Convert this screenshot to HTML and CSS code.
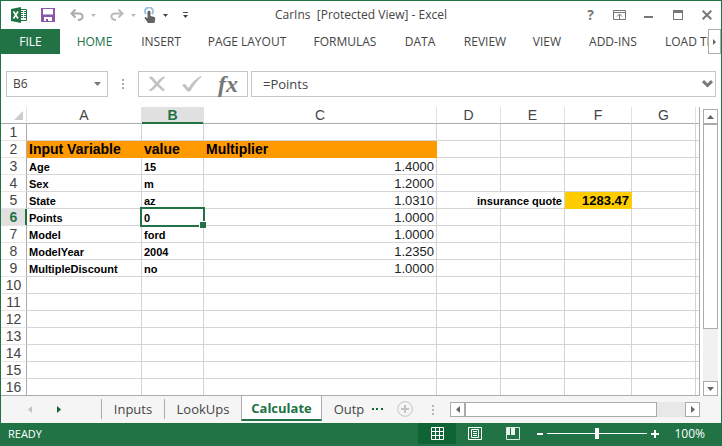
FILE: index.html
```html
<!DOCTYPE html>
<html lang="en">
<head>
<meta charset="utf-8">
<title>CarIns [Protected View] - Excel</title>
<link rel="stylesheet" href="styles.css">
</head>
<body>
<div class="window">
  <header class="titlebar">
    <div class="quick">
      <svg class="logo" width="16" height="16" viewBox="0 0 16 16" aria-hidden="true"><path fill="#fff" stroke="#217346" d="M8.500 2.500h7v11h-7z"/><path stroke="#217346" stroke-width="1" d="M10 4.500h2M13 4.500h2M10 6.500h2M13 6.500h2M10 8.500h2M13 8.500h2M10 10.500h2M13 10.500h2"/><path fill="#217346" d="M0 2l10-2v16L0 14z"/><path fill="none" stroke="#fff" stroke-width="1.600" d="M2.500 4.500l4.500 7M7 4.500l-4.500 7"/></svg>
      <button class="tool" aria-label="Save"><svg width="14" height="14" viewBox="0 0 14 14"><path fill="#8a55ab" fill-rule="evenodd" d="M0 0h14v14H0zM2 1v5.500h10V1zM3 9v4h2v-2h2v2h4V9z"/></svg></button>
      <button class="tool" aria-label="Undo"><svg width="14" height="12" viewBox="0 0 14 12"><path fill="none" stroke="#ababab" stroke-width="2" d="M5.500 0.500L1.500 4.500L5.500 8.500M2 4.500h7c5 0 5 6-1 6.500"/></svg></button>
      <button class="tool caret-pale undo-list" aria-label="Undo list"><svg width="5" height="3" viewBox="0 0 5 3"><path d="M0 0h5L2.500 3z"/></svg></button>
      <button class="tool" aria-label="Redo"><svg width="14" height="12" viewBox="0 0 14 12"><path fill="none" stroke="#bcbcbc" stroke-width="2" d="M8.500 0.500L12.500 4.500L8.500 8.500M12 4.500H5c-5 0-5 6 1 6.500"/></svg></button>
      <button class="tool caret-pale" aria-label="Redo list"><svg width="5" height="3" viewBox="0 0 5 3"><path d="M0 0h5L2.500 3z"/></svg></button>
      <button class="tool" aria-label="Touch mode"><svg width="12" height="16" viewBox="0 0 12 16"><path fill="none" stroke="#9fbfe0" stroke-width="2" d="M2 7a4 4 0 1 1 6 0"/><path fill="#636363" d="M3.500 4.500q1.500-1.500 3 0V9l4 1q1 .3.700 2L10.500 16H4L0.500 11q.5-1.500 2-.5l1 1z"/></svg></button>
      <button class="tool caret-dark" aria-label="Touch mode list"><svg width="5" height="3" viewBox="0 0 5 3"><path d="M0 0h5L2.500 3z"/></svg></button>
      <button class="tool caret-dark" aria-label="Customize toolbar"><svg width="5" height="6" viewBox="0 0 5 6"><path d="M0 0h5v1H0zM0 3h5L2.500 6z"/></svg></button>
    </div>
    <h1>CarIns&nbsp; [Protected View] - Excel</h1>
    <div class="sysbuttons">
      <button class="tool help" aria-label="Help">?</button>
      <button class="tool" aria-label="Ribbon options"><svg width="13" height="10" viewBox="0 0 13 10"><path fill="none" stroke="#777" d="M.5.500h12v9H.500zM.500 2.500h12M6.500 4v5M4 6.500L6.500 4L9 6.500"/></svg></button>
      <button class="tool" aria-label="Minimize"><svg width="9" height="10" viewBox="0 0 9 10"><path fill="#777" d="M0 6h9v2H0z"/></svg></button>
      <button class="tool" aria-label="Maximize"><svg width="10" height="10" viewBox="0 0 10 10"><path fill="#777" fill-rule="evenodd" d="M0 0h10v10H0zM1 3v6h8V3z"/></svg></button>
      <button class="tool" aria-label="Close"><svg width="10" height="10" viewBox="0 0 10 10"><path stroke="#777" stroke-width="2" d="M.7.700l8.600 8.600M9.300.700L.7 9.300"/></svg></button>
    </div>
  </header>

  <nav class="ribbon">
    <a class="file" href="#">FILE</a>
    <a class="current" href="#">HOME</a>
    <a href="#">INSERT</a>
    <a href="#">PAGE LAYOUT</a>
    <a href="#">FORMULAS</a>
    <a href="#">DATA</a>
    <a href="#">REVIEW</a>
    <a href="#">VIEW</a>
    <a href="#">ADD-INS</a>
    <a class="overflowing" href="#">LOAD TEST</a>
    <button class="more" aria-label="More tabs"><svg width="3" height="6" viewBox="0 0 3 6"><path fill="#666" d="M0 0l3 3l-3 3z"/></svg></button>
  </nav>

  <div class="formulabar">
    <div class="namebox">
      <select aria-label="Name box"><option>B6</option></select>
      <svg width="7" height="4" viewBox="0 0 7 4" aria-hidden="true"><path fill="#777" d="M0 0h7L3.500 4z"/></svg>
    </div>
    <svg class="grip" width="2" height="10" viewBox="0 0 2 10" aria-hidden="true"><path fill="#aaa" d="M0 0h2v2H0zM0 4h2v2H0zM0 8h2v2H0z"/></svg>
    <div class="actions">
      <button class="tool" aria-label="Cancel"><svg width="18" height="16" viewBox="0 0 18 16"><path fill="#c3c3c3" d="M1 1.500q2-2 4 0l4 4.500Q13 1 16 .5l1 1Q14 3.500 11 8l6 6-1.500 1.500Q12 13 9 10q-3 4-6.500 5.500L.8 14Q4.500 12 7 8z"/></svg></button>
      <button class="tool" aria-label="Enter"><svg width="20" height="16" viewBox="0 0 20 16"><path fill="#c3c3c3" d="M0 9q2.500-2 4 0l2.500 3Q11 4 19 0l.5 1Q13 6.500 8.500 15q-2 1.500-3.500 0z"/></svg></button>
      <button class="tool fx" aria-label="Insert function">fx</button>
    </div>
    <div class="formula">
      <input type="text" aria-label="Formula" value="=Points">
      <svg width="11" height="8" viewBox="0 0 11 8" aria-hidden="true"><path fill="none" stroke="#777" stroke-width="3" d="M1 1.200l4.500 4.300l4.500-4.300"/></svg>
    </div>
  </div>

  <main class="workspace">
    <table class="sheet">
      <colgroup><col class="rowcol"><col class="ca"><col class="cb"><col class="cc"><col class="cd"><col class="cd"><col class="cf"><col class="cd"><col></colgroup>
      <thead>
        <tr><th class="corner"><svg width="9" height="9" viewBox="0 0 9 9" aria-hidden="true"><path fill="#ccc" d="M9 0v9H0z"/></svg></th><th>A</th><th class="active">B</th><th>C</th><th>D</th><th>E</th><th>F</th><th>G</th><th></th></tr>
      </thead>
      <tbody>
        <tr><th>1</th><td></td><td></td><td></td><td></td><td></td><td></td><td></td><td></td></tr>
        <tr class="heading"><th>2</th><td>Input Variable</td><td>value</td><td>Multiplier</td><td></td><td></td><td></td><td></td><td></td></tr>
        <tr><th>3</th><td>Age</td><td>15</td><td class="num">1.4000</td><td></td><td></td><td></td><td></td><td></td></tr>
        <tr><th>4</th><td>Sex</td><td>m</td><td class="num">1.2000</td><td></td><td></td><td></td><td></td><td></td></tr>
        <tr><th>5</th><td>State</td><td>az</td><td class="num">1.0310</td><td class="quote" colspan="2">insurance quote</td><td class="total">1283.47</td><td></td><td></td></tr>
        <tr><th class="active">6</th><td>Points</td><td class="selected">0<span class="cursor"></span></td><td class="num">1.0000</td><td></td><td></td><td></td><td></td><td></td></tr>
        <tr><th>7</th><td>Model</td><td>ford</td><td class="num">1.0000</td><td></td><td></td><td></td><td></td><td></td></tr>
        <tr><th>8</th><td>ModelYear</td><td>2004</td><td class="num">1.2350</td><td></td><td></td><td></td><td></td><td></td></tr>
        <tr><th>9</th><td>MultipleDiscount</td><td>no</td><td class="num">1.0000</td><td></td><td></td><td></td><td></td><td></td></tr>
        <tr><th>10</th><td></td><td></td><td></td><td></td><td></td><td></td><td></td><td></td></tr>
        <tr><th>11</th><td></td><td></td><td></td><td></td><td></td><td></td><td></td><td></td></tr>
        <tr><th>12</th><td></td><td></td><td></td><td></td><td></td><td></td><td></td><td></td></tr>
        <tr><th>13</th><td></td><td></td><td></td><td></td><td></td><td></td><td></td><td></td></tr>
        <tr><th>14</th><td></td><td></td><td></td><td></td><td></td><td></td><td></td><td></td></tr>
        <tr><th>15</th><td></td><td></td><td></td><td></td><td></td><td></td><td></td><td></td></tr>
        <tr><th>16</th><td></td><td></td><td></td><td></td><td></td><td></td><td></td><td></td></tr>
      </tbody>
    </table>
    <div class="vscroll">
      <button class="step" aria-label="Scroll up"><svg width="7" height="4" viewBox="0 0 7 4"><path d="M0 4h7L3.500 0z"/></svg></button>
      <div class="thumb"></div>
      <div class="track"></div>
      <button class="step" aria-label="Scroll down"><svg width="7" height="4" viewBox="0 0 7 4"><path d="M0 0h7L3.500 4z"/></svg></button>
    </div>
  </main>

  <div class="sheetbar">
    <div class="sheetnav">
      <button class="tool" aria-label="Previous sheet"><svg width="4" height="7" viewBox="0 0 4 7"><path fill="#c3c3c3" d="M4 0v7L0 3.500z"/></svg></button>
      <button class="tool" aria-label="Next sheet"><svg width="4" height="7" viewBox="0 0 4 7"><path fill="#0e6434" d="M0 0v7l4-3.500z"/></svg></button>
    </div>
    <div class="tabs">
      <button class="tab">Inputs</button>
      <button class="tab wide">LookUps</button>
      <button class="tab open">Calculate</button>
      <button class="tab last">Outp</button>
      <button class="tool ellipsis" aria-label="More sheets"><svg width="11" height="2" viewBox="0 0 11 2"><path fill="#0e6434" d="M0 0h2v2H0zM4 0h2v2H4zM9 0h2v2H9z"/></svg></button>
      <button class="tool" aria-label="New sheet"><svg width="16" height="16" viewBox="0 0 16 16"><circle cx="8" cy="8" r="7.300" fill="none" stroke="#c3c3c3"/><path fill="#c3c3c3" d="M7 4h2v3h3v2H9v3H7V9H4V7h3z"/></svg></button>
    </div>
    <svg class="grip" width="2" height="10" viewBox="0 0 2 10" aria-hidden="true"><path fill="#b5b5b5" d="M0 0h2v2H0zM0 4h2v2H0zM0 8h2v2H0z"/></svg>
    <div class="hscroll">
      <button class="step" aria-label="Scroll left"><svg width="4" height="7" viewBox="0 0 4 7"><path d="M4 0v7L0 3.500z"/></svg></button>
      <div class="thumb"></div>
      <div class="track"></div>
      <button class="step" aria-label="Scroll right"><svg width="4" height="7" viewBox="0 0 4 7"><path d="M0 0v7l4-3.500z"/></svg></button>
    </div>
  </div>

  <footer class="status">
    <span class="ready">READY</span>
    <button class="view on" aria-label="Normal view"><svg width="13" height="13" viewBox="0 0 13 13"><path fill="none" stroke="#fff" d="M.5.500h12v12H.500zM4.500 0v13M8.500 0v13M0 4.500h13M0 8.500h13"/></svg></button>
    <button class="view" aria-label="Page layout"><svg width="14" height="13" viewBox="0 0 14 13"><path fill="none" stroke="#fff" d="M.5.500h13v12H.500zM3.500 2.500h7v8h-7zM5 4.500h4M5 6.500h4M5 8.500h4"/></svg></button>
    <button class="view" aria-label="Page break preview"><svg width="14" height="13" viewBox="0 0 14 13"><path fill="none" stroke="#dcebe2" d="M.5.500h13v12H.500z"/><path fill="#e8f3ec" d="M1 1h3v7H1zM5 1h4v7H5z"/></svg></button>
    <button class="zoomstep" aria-label="Zoom out"><svg width="8" height="8" viewBox="0 0 8 8"><path fill="#fff" d="M1 3h6v2H1z"/></svg></button>
    <input class="zoom" type="range" min="0" max="200" value="100" aria-label="Zoom">
    <button class="zoomstep" aria-label="Zoom in"><svg width="8" height="8" viewBox="0 0 8 8"><path fill="#fff" d="M3 0h2v3h3v2H5v3H3V5H0V3h3z"/></svg></button>
    <span class="percent">100%</span>
  </footer>
</div>
</body>
</html>
```

FILE: styles.css
```css
* { box-sizing: border-box; }

body {
  margin: 0;
  background: #fff;
  color: #444;
  font: 12px/16px "Open Sans", "Noto Sans", sans-serif;
}

button, input, select {
  margin: 0;
  padding: 0;
  border: 0;
  border-radius: 0;
  outline: 0;
  background: none;
  color: inherit;
  font: inherit;
}

svg { display: block; flex: none; }

.window {
  display: flex;
  flex-direction: column;
  min-height: 100vh;
  overflow: hidden;
  border: 1px solid #217346;
  border-bottom: 0;
}

.tool { display: flex; align-items: center; justify-content: center; }

/* Title bar */
.titlebar {
  display: grid;
  grid-template-columns: 1fr auto 1fr;
  align-items: center;
  height: 28px;
}
.quick { display: grid; grid-template-columns: 16px 42px 16px 24px 16px 16px 18px 12px 28px; align-items: center; padding-left: 10px; }
.undo-list { margin-right: 8px; }
.caret-pale { fill: #bcbcbc; }
.caret-dark { fill: #444; }
h1 { margin: 0; font-size: 12px; font-weight: 400; line-height: 28px; }
.sysbuttons { display: grid; grid-template-columns: repeat(5, 29px); justify-content: end; }
.help { color: #777; font-size: 14px; font-weight: 700; }

/* Ribbon tabs */
.ribbon {
  position: relative;
  display: grid;
  grid-template-columns: 59px 69px 64px 108px 88px 62px 68px 56px 76px 1fr;
  height: 25px;
}
.ribbon a { color: #444; text-align: center; text-decoration: none; line-height: 25px; white-space: nowrap; }
.ribbon .current { color: #217346; }
.ribbon .file { background: #217346; color: #fff; }
.ribbon .overflowing { min-width: 0; padding-left: 14px; overflow: hidden; text-align: left; }
.more {
  position: absolute;
  top: 0;
  right: 0;
  display: flex;
  align-items: center;
  justify-content: center;
  width: 13px;
  height: 25px;
  border: 1px solid #ababab;
  background: #fff;
}

/* Formula bar */
.formulabar { display: flex; align-items: center; padding: 17px 5px 10px; }
.namebox, .actions, .formula { display: flex; align-items: center; height: 26px; border: 1px solid #c6c6c6; }
.namebox { width: 102px; padding: 0 6px; }
.namebox select { flex: 1; appearance: none; }
.grip { margin: 0 14px; }
.actions { width: 110px; margin-right: 3px; padding: 0 9px; justify-content: space-between; }
.fx { font: italic 700 24px/22px "Liberation Serif", serif; color: #777; }
.formula { flex: 1; padding: 0 2px 0 11px; }
.formula input { flex: 1; min-width: 0; font-size: 13px; }

/* Worksheet */
.workspace { display: flex; }
.sheet {
  flex: 1;
  width: 0;
  table-layout: fixed;
  border-collapse: separate;
  border-spacing: 0;
  border-right: 1px solid #ababab;
  border-bottom: 1px solid #ababab;
  font: 11px/14px "Liberation Sans", sans-serif;
}
.rowcol { width: 26px; }
.ca { width: 115px; }
.cb { width: 62px; }
.cc { width: 233px; }
.cd { width: 64px; }
.cf { width: 67px; }
.sheet td, .sheet th {
  height: 17px;
  padding: 2px 2px 0;
  border-right: 1px solid #d4d4d4;
  border-bottom: 1px solid #d4d4d4;
  text-align: left;
  white-space: nowrap;
}
.sheet td { color: #000; font-weight: 700; }
.sheet tr > :last-child { border-right: 0; }
.sheet tbody tr:last-child > * { height: 16px; border-bottom: 0; }
.sheet th { padding: 1px 0 0; color: #444; font-size: 14px; line-height: 15px; font-weight: 400; text-align: center; }
.sheet tbody th { border-right-color: #ababab; border-bottom-color: #e6e6e6; }
.sheet thead th { border-right-color: #e1e1e1; border-bottom-color: #ababab; }
.sheet .corner svg { margin: 0 3px 0 auto; }
.sheet th.active { background: #e1e1e1; color: #217346; font-weight: 700; }
.sheet thead th.active { border-bottom-color: #217346; box-shadow: inset 0 -1px #217346; }
.sheet tbody th.active { border-right-color: #217346; box-shadow: inset -1px 0 #217346; }
.sheet td.num, .sheet .total, .sheet .heading td { padding-top: 1px; line-height: 15px; }
.sheet td.num { color: #222; font-size: 13px; font-weight: 400; text-align: right; }
.sheet .heading td { font-size: 14px; }
.sheet .heading td:nth-child(-n+4) { border-color: #f90; background: #f90; }
.sheet .quote { text-align: right; }
.sheet .total { border-color: #fc0; background: #fc0; font-size: 13px; text-align: right; }
.selected { position: relative; }
.cursor { position: absolute; inset: -2px; border: 2px solid #217346; }
.cursor::after {
  content: "";
  position: absolute;
  right: -3px;
  bottom: -3px;
  width: 6px;
  height: 6px;
  border: solid #fff;
  border-width: 1px 0 0 1px;
  background: #217346;
}

/* Scroll bars */
.step {
  display: flex;
  flex: none;
  align-items: center;
  justify-content: center;
  width: 15px;
  height: 15px;
  border: 1px solid #ababab;
  background: #fff;
  fill: #666;
}
.thumb { border: 1px solid #ababab; background: #fff; }
.vscroll { display: flex; flex-direction: column; margin: 2px 3px 0; }
.vscroll .thumb { flex: 205; }
.vscroll .track { flex: 52; background: #f1f1f1; }
.hscroll { display: flex; flex: 1; padding-right: 21px; }
.hscroll .thumb { flex: 192; }
.hscroll .track { flex: 28; background: #e8e8e8; }

/* Sheet tabs */
.sheetbar { display: flex; align-items: center; height: 27px; background: #f5f5f5; }
.sheetnav { display: flex; gap: 25px; width: 100px; padding-left: 27px; }
.tabs { display: flex; align-items: center; align-self: start; height: 25px; }
.tab { width: 63px; height: 20px; border-left: 1px solid #ababab; font-size: 13px; line-height: 18px; }
.tab.wide { width: 77px; }
.tab.open {
  width: 81px;
  height: 25px;
  border: solid #ababab;
  border-width: 0 1px 2px;
  border-bottom-color: #217346;
  background: #fff;
  color: #217346;
  font-weight: 700;
}
.tab.last { width: 50px; padding-left: 4px; border: 0; }
.ellipsis { margin-right: 14px; }
.sheetbar .grip { margin: 0 16px 0 19px; }

/* Status bar */
.status { display: flex; flex: 1; align-items: center; min-height: 23px; padding: 0 16px 2px 0; background: #217346; color: #fff; font-size: 11px; }
.ready { flex: 1; padding-left: 7px; }
.view { display: flex; align-items: center; justify-content: center; width: 38px; height: 21px; }
.view.on { background: #0e6434; }
.zoomstep { width: 8px; height: 8px; margin-left: 4px; }
.zoom { width: 100px; height: 11px; margin-left: 3px; appearance: none; background: linear-gradient(#fff, #fff) center / 100% 1px no-repeat; }
.zoom::-webkit-slider-thumb { appearance: none; width: 4px; height: 11px; border-radius: 0; background: #fff; }
.percent { margin-left: 15px; font-size: 12px; }
```
